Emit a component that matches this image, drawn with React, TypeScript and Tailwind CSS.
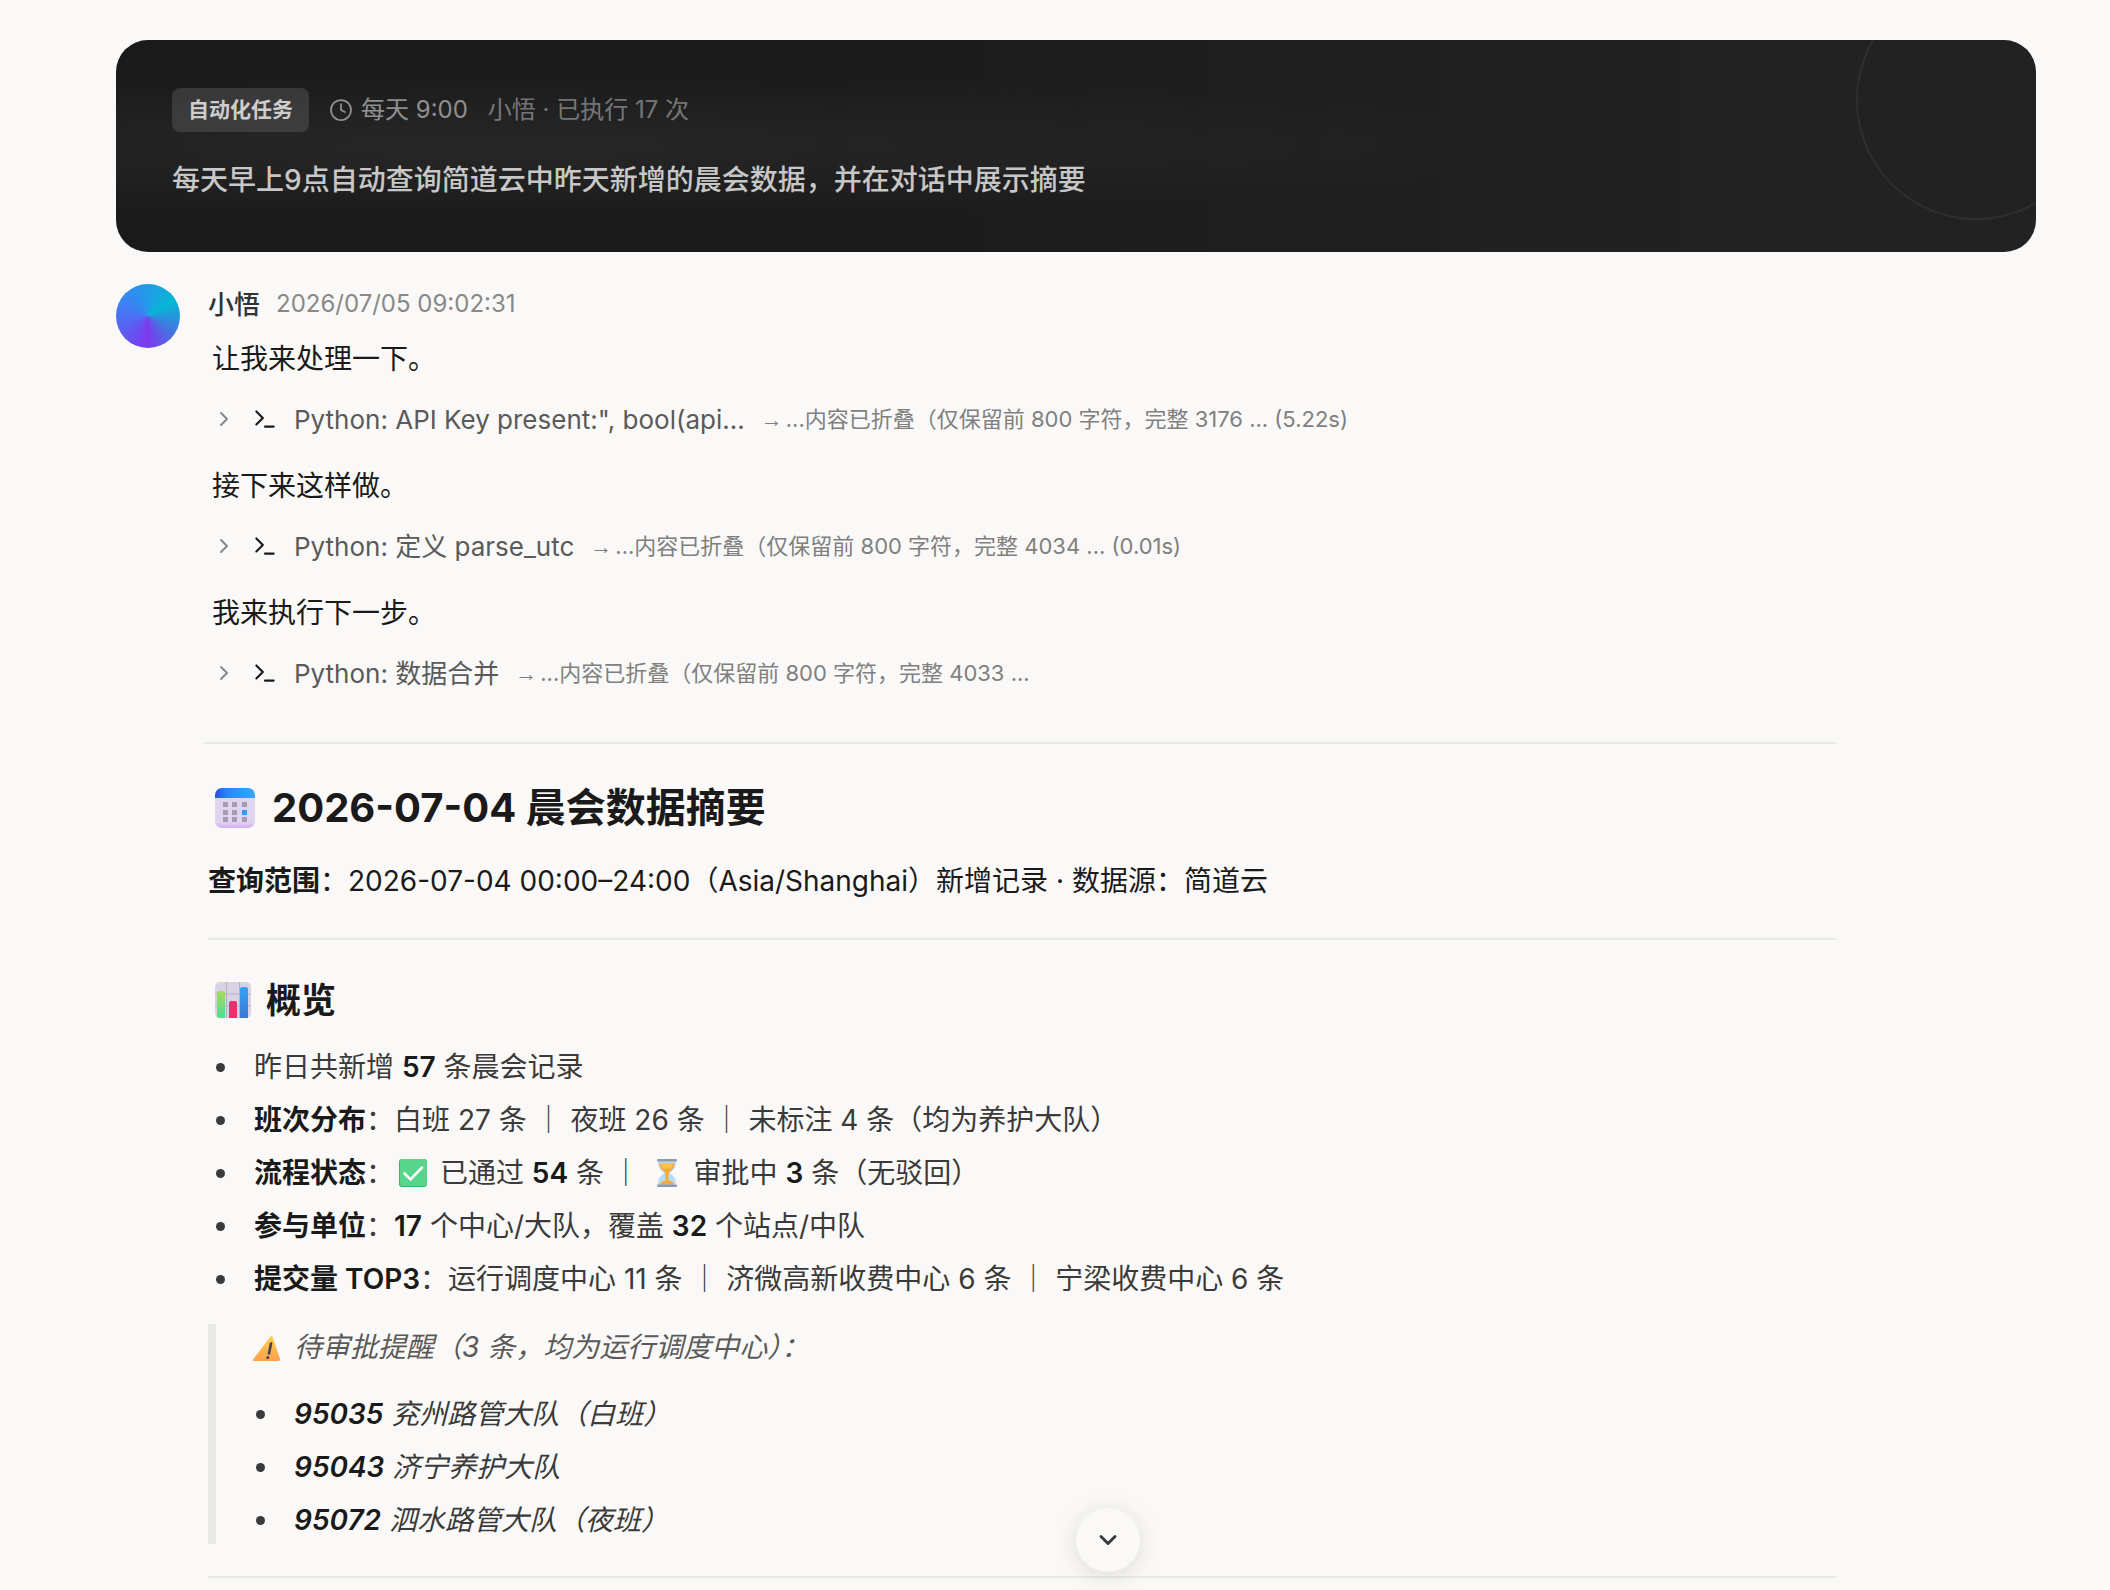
import React from "react"
import { ChevronDown, ChevronRight, Clock, Terminal } from "lucide-react"

const steps = [
	{
		intro: "让我来处理一下。",
		title: "Python: API Key present:\", bool(api...",
		result: "...内容已折叠（仅保留前 800 字符，完整 3176 ... (5.22s)"
	},
	{
		intro: "接下来这样做。",
		title: "Python: 定义 parse_utc",
		result: "...内容已折叠（仅保留前 800 字符，完整 4034 ... (0.01s)"
	},
	{
		intro: "我来执行下一步。",
		title: "Python: 数据合并",
		result: "...内容已折叠（仅保留前 800 字符，完整 4033 ..."
	}
]

const pending = [
	{ id: "95035", name: "兖州路管大队（白班）" },
	{ id: "95043", name: "济宁养护大队" },
	{ id: "95072", name: "泗水路管大队（夜班）" }
]

export default function App() {
	return (
		<div className="min-h-screen w-full overflow-hidden bg-[#faf9f7] pt-10 pr-[74px] pl-[116px] font-['Inter','Noto_Sans_CJK_SC',sans-serif] text-[#1a1a1a]">
			<TaskCard />
			<main className="mt-8 flex items-start gap-7">
				<div className="size-16 shrink-0 rounded-full bg-[conic-gradient(from_180deg,#7c3aed,#3b82f6,#06b6d4,#7c3aed)]"></div>
				<div className="mr-[200px] min-w-0 grow">
					<div className="flex h-10 items-center gap-4">
						<span className="text-[26px] font-medium text-[#333]">小悟</span>
						<time className="text-2xl text-[#888]">2026/07/05 09:02:31</time>
					</div>
					{steps.map((step, id) => (
						<Step key={id} {...step} />
					))}
					<hr className="-ml-1 mt-[37px] border-t-2 border-[#e9e9e7]" />
					<Summary />
				</div>
			</main>
			<div className="pointer-events-none fixed inset-x-0 bottom-[18px] flex justify-center pl-[106px]">
				<button
					aria-label="滚动到底部"
					className="pointer-events-auto flex size-16 items-center justify-center rounded-full bg-[#faf9f7] shadow-[0_4px_24px_rgba(0,0,0,0.12)]">
					<ChevronDown size={28} strokeWidth={2.5} className="text-[#3a3a3a]" />
				</button>
			</div>
		</div>
	)
}

function TaskCard() {
	return (
		<header className="relative w-full overflow-hidden rounded-[32px] bg-[#1a1a1a] bg-[radial-gradient(ellipse_at_20%_50%,rgba(255,255,255,0.06),transparent_50%),linear-gradient(to_right,transparent_35%,rgba(255,255,255,0.035)_85%)] px-14 py-12">
			<div className="absolute -right-[60px] -top-[60px] size-60 rounded-full border-2 border-white/6"></div>
			<div className="flex items-center gap-5">
				<span className="flex h-11 items-center rounded-lg bg-white/12 px-4 text-[21px] font-semibold text-white/75">
					自动化任务
				</span>
				<span className="flex items-center gap-2 text-2xl text-white/50">
					<Clock size={24} strokeWidth={1.75} />
					每天 9:00
				</span>
				<span className="text-2xl text-white/40">小悟 · 已执行 17 次</span>
			</div>
			<h1 className="mt-6 text-[28px]/12 font-medium text-white/75">
				每天早上9点自动查询简道云中昨天新增的晨会数据，并在对话中展示摘要
			</h1>
		</header>
	)
}

function Step(props) {
	return (
		<section className="h-[127px] pl-1">
			<p className="pt-3 text-[28px]/[47px]">{props.intro}</p>
			<button className="mt-1 flex h-16 items-center gap-4 text-left">
				<ChevronRight size={24} className="text-[#888]" />
				<Terminal size={26} />
				<span className="text-[26px] text-[#5a5a5a]">{props.title}</span>
				<span className="flex items-center gap-[3px] text-[22px] text-[#808080]">
					<span className="font-['Liberation_Sans',sans-serif]">→</span>
					<span>{props.result}</span>
				</span>
			</button>
		</section>
	)
}

function Summary() {
	return (
		<article className="text-[28px]/[47px]">
			<h2 className="mt-9 flex items-center gap-4 pl-[6px] text-[40px]/14 font-bold">
				<CalendarEmoji />
				2026-07-04 晨会数据摘要
			</h2>
			<p className="mt-[22px]">
				<strong className="font-semibold">查询范围</strong>：2026-07-04 00:00–24:00（Asia/Shanghai）新增记录 · 数据源：简道云
			</p>
			<hr className="mt-[33px] border-t-2 border-[#e9e9e7]" />
			<h3 className="mt-9 flex items-center gap-[14px] pl-[6px] text-[35px]/12 font-semibold">
				<ChartEmoji />
				概览
			</h3>
			<ul className="mt-5 flex flex-col gap-[6px] text-[#3a3a3a]">
				<Item>
					昨日共新增 <B>57</B> 条晨会记录
				</Item>
				<Item>
					<B>班次分布</B>：白班 27 条 ｜ 夜班 26 条 ｜ 未标注 4 条（均为养护大队）
				</Item>
				<Item>
					<B>流程状态</B>：<CheckEmoji /> 已通过 <B>54</B> 条 ｜ <HourglassEmoji /> 审批中 <B>3</B> 条（无驳回）
				</Item>
				<Item>
					<B>参与单位</B>：<B>17</B> 个中心/大队，覆盖 <B>32</B> 个站点/中队
				</Item>
				<Item>
					<B>提交量 TOP3</B>：运行调度中心 11 条 ｜ 济微高新收费中心 6 条 ｜ 宁梁收费中心 6 条
				</Item>
			</ul>
			<blockquote className="mt-[21px] border-l-8 border-[#e9e9e7] pl-8 italic text-[#5a5a5a]">
				<p className="flex items-center gap-3 pl-1">
					<WarningEmoji />
					待审批提醒（3 条，均为运行调度中心）：
				</p>
				<ul className="mt-5 flex flex-col gap-[6px] text-[#3a3a3a]">
					{pending.map((row) => (
						<Item key={row.id}>
							<B>{row.id}</B> {row.name}
						</Item>
					))}
				</ul>
			</blockquote>
			<hr className="mt-8 border-t-2 border-[#e9e9e7]" />
		</article>
	)
}

function Item(props) {
	return (
		<li className="flex items-center">
			<span className="ml-2 mr-[29px] size-[9px] shrink-0 rounded-full bg-[#3a3a3a]"></span>
			<span>{props.children}</span>
		</li>
	)
}

function B(props) {
	return <strong className="font-semibold text-[#1a1a1a]">{props.children}</strong>
}

function CalendarEmoji() {
	return (
		<svg width="42" height="42" viewBox="0 0 42 42" role="img" aria-label="日历">
			<defs>
				<linearGradient id="calTop" x1="0" x2="1">
					<stop offset="0" stopColor="#2b50d0" />
					<stop offset="0.3" stopColor="#2787f5" />
					<stop offset="1" stopColor="#33a8ff" />
				</linearGradient>
				<linearGradient id="calBody" x1="0" y1="0" x2="0" y2="1">
					<stop offset="0.85" stopColor="#e0d5ee" />
					<stop offset="1" stopColor="#d4abf5" />
				</linearGradient>
				<clipPath id="calClip">
					<rect x="1" y="1" width="40" height="40" rx="7" />
				</clipPath>
			</defs>
			<g clipPath="url(#calClip)">
				<rect x="1" y="1" width="40" height="40" fill="url(#calBody)" />
				<rect x="1" y="1" width="40" height="10" fill="url(#calTop)" />
			</g>
			<g fill="#a59ab2">
				<rect x="9" y="15" width="5" height="5" />
				<rect x="18" y="15" width="5" height="5" />
				<rect x="28" y="15" width="5" height="5" />
				<rect x="9" y="23" width="5" height="5" />
				<rect x="18" y="23" width="5" height="5" />
				<rect x="28" y="23" width="5" height="5" fill="#2f9bfa" />
				<rect x="9" y="30" width="5" height="5" />
				<rect x="18" y="30" width="5" height="5" />
				<rect x="28" y="30" width="5" height="5" />
			</g>
		</svg>
	)
}

function ChartEmoji() {
	return (
		<svg width="38" height="38" viewBox="0 0 38 38" role="img" aria-label="图表">
			<defs>
				<linearGradient id="barGreen" x1="0" y1="0" x2="0" y2="1">
					<stop offset="0" stopColor="#a6dc5c" />
					<stop offset="1" stopColor="#4fdc94" />
				</linearGradient>
				<linearGradient id="barBlue" x1="0" y1="0" x2="0" y2="1">
					<stop offset="0" stopColor="#33a4f5" />
					<stop offset="1" stopColor="#3b76d0" />
				</linearGradient>
			</defs>
			<rect x="1" y="1" width="36" height="36" rx="5" fill="#d9d2e2" />
			<path d="M12.500 1v36M25.500 1v36M1 13h36M1 25h36" stroke="#b9b0c6" strokeWidth="1" />
			<path d="M3 12a2 2 0 0 1 2-2h4a2 2 0 0 1 2 2v25H5a2 2 0 0 1-2-2z" fill="url(#barGreen)" />
			<path d="M15 22a2 2 0 0 1 2-2h4a2 2 0 0 1 2 2v15h-8z" fill="#e8316f" />
			<path d="M26 8a2 2 0 0 1 2-2h4a2 2 0 0 1 2 2v29h-8z" fill="url(#barBlue)" />
		</svg>
	)
}

function CheckEmoji() {
	return (
		<svg className="mx-1 mb-1 inline-block" width="30" height="30" viewBox="0 0 30 30" role="img" aria-label="已通过">
			<rect x="1" y="1" width="28" height="28" rx="3" fill="#2fb878" />
			<rect x="2" y="1" width="27" height="27" rx="3" fill="#56d58b" />
			<path d="M6.500 15.500l6 6L24 9.500" fill="none" stroke="#fff" strokeWidth="2.600" strokeLinecap="round" />
		</svg>
	)
}

function HourglassEmoji() {
	return (
		<svg className="mx-1 mb-1 inline-block" width="30" height="30" viewBox="0 0 30 30" role="img" aria-label="审批中">
			<path d="M6 3h18c0 6-2 9-6.500 12C22 18 24 21 24 27H6c0-6 2-9 6.500-12C8 12 6 9 6 3z" fill="#b4dcfb" />
			<path d="M7.500 5.500h15c0 4-2 6.500-5.500 9l-.5 3v5c3 .5 5 1.500 6 4h-15c1-2.500 3-3.500 6-4v-5l-.5-3c-3.500-2.500-5.500-5-5.500-9z" fill="#f5aa3a" />
			<path d="M9 5.500h12c0 2-.5 3.500-2 5H11c-1.500-1.500-2-3-2-5z" fill="#fdc04c" />
			<rect x="5" y="1" width="20" height="2.500" rx="1" fill="#8d99ad" />
			<rect x="5" y="26.500" width="20" height="2.500" rx="1" fill="#8d99ad" />
		</svg>
	)
}

function WarningEmoji() {
	return (
		<svg width="30" height="30" viewBox="0 0 30 30" role="img" aria-label="警告">
			<defs>
				<linearGradient id="warn" x1="0" y1="0" x2="0" y2="1">
					<stop offset="0" stopColor="#fdd04f" />
					<stop offset="1" stopColor="#ff9f4c" />
				</linearGradient>
			</defs>
			<path d="M20.500 3.500L28 26q.3 2-1.500 2H2q-2 0-.800-1.800L18.500 3.500q1.200-1.500 2 0z" fill="url(#warn)" />
			<path d="M19 10.500l-2 10" stroke="#4a3f4d" strokeWidth="2.600" strokeLinecap="round" />
			<circle cx="15.800" cy="24.500" r="1.500" fill="#4a3f4d" />
		</svg>
	)
}
